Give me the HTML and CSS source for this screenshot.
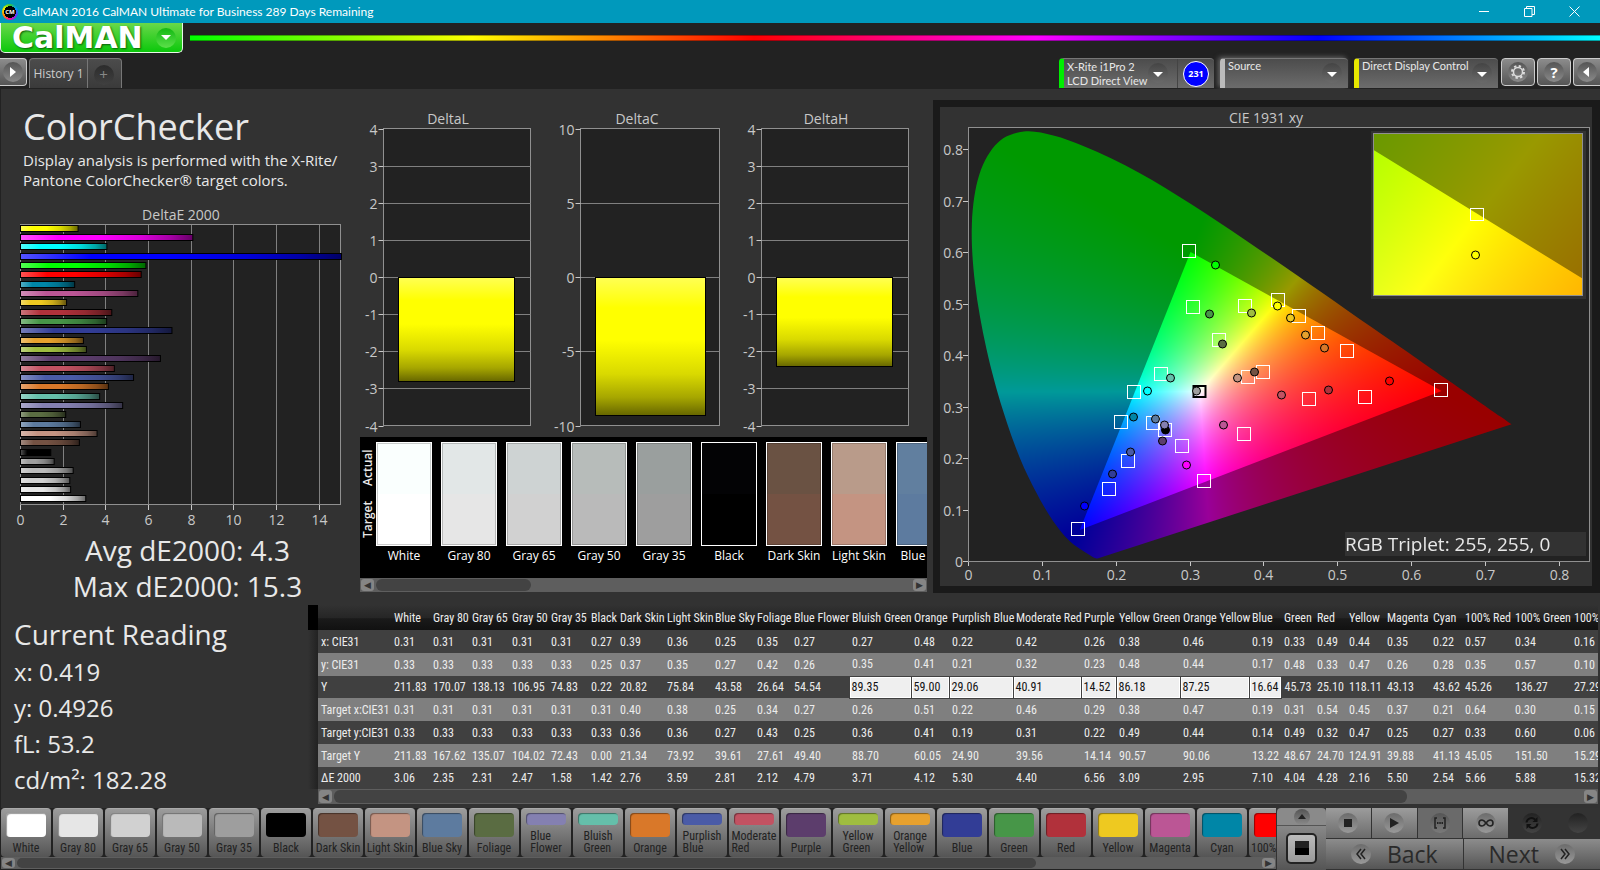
FILE: index.html
```html
<!DOCTYPE html>
<html lang="en">
<head>
<meta charset="utf-8">
<title>CalMAN 2016</title>
<link rel="stylesheet" href="styles.css">
</head>
<body>
<div class="app">
  <div class="titlebar">
    <span class="app-icon">CM</span>
    <span class="title-text">CalMAN 2016 CalMAN Ultimate for Business 289 Days Remaining</span>
    <div class="window-buttons">
      <button aria-label="Minimize"><svg width="11" height="11" viewBox="0 0 11 11"><path d="M0 5.5H10"/></svg></button>
      <button aria-label="Restore"><svg width="11" height="11" viewBox="0 0 11 11"><path d="M.5 2.5h7.500v8H.5zM2.500 2.500v-2h8v8h-2.500"/></svg></button>
      <button aria-label="Close"><svg width="11" height="11" viewBox="0 0 11 11"><path d="M.5.5l10 10M10.500.5l-10 10"/></svg></button>
    </div>
  </div>

  <div class="brandbar">
    <button class="logo"><span>CalMAN</span><span class="logo-drop"><svg width="10" height="6" viewBox="0 0 10 6"><path d="M0 0h10L5 5z"/></svg></span></button>
    <div class="spectrum"></div>
  </div>

  <div class="toolbar">
    <button class="square-button play-button" aria-label="Expand"><span class="disc"><svg width="20" height="20" viewBox="0 0 20 20"><path d="M7 5v10l6-5z" fill="#fff"/></svg></span></button>
    <div class="tabs">
      <button class="tab">History 1</button>
      <button class="tab tab-add" aria-label="Add history"><span>+</span></button>
    </div>
    <div class="devices">
      <div class="device meter">
        <button class="device-name">X-Rite i1Pro 2<br>LCD Direct View<span class="drop"><svg width="20" height="20" viewBox="0 0 20 20"><path d="M5 9h10l-5 5z" fill="#fff"/></svg></span></button>
        <span class="meter-count"><b>231</b></span>
      </div>
      <div class="device source"><button class="device-name">Source<span class="drop"><svg width="20" height="20" viewBox="0 0 20 20"><path d="M5 9h10l-5 5z" fill="#fff"/></svg></span></button></div>
      <div class="device display"><button class="device-name">Direct Display Control<span class="drop"><svg width="20" height="20" viewBox="0 0 20 20"><path d="M5 9h10l-5 5z" fill="#fff"/></svg></span></button></div>
      <button class="square-button" aria-label="Settings"><span class="disc"><svg width="20" height="20" viewBox="0 0 20 20"><circle cx="10" cy="10" r="4.500" fill="none" stroke="#ddd" stroke-width="1.500"/><circle cx="10" cy="10" r="6" fill="none" stroke="#ddd" stroke-width="2" stroke-dasharray="2.350 2.360"/></svg></span></button>
      <button class="square-button" aria-label="Help"><span class="disc help">?</span></button>
      <button class="square-button edge-button" aria-label="Collapse"><span class="disc"><svg width="20" height="20" viewBox="0 0 20 20"><path d="M12 5v10l-6-5z" fill="#fff"/></svg></span></button>
    </div>
  </div>

  <main class="workspace">
    <div class="charts">
      <section class="overview">
        <h1>ColorChecker</h1>
        <p class="intro">Display analysis is performed with the X-Rite/<br>Pantone ColorChecker® target colors.</p>
        <svg class="chart" id="delta-e" viewBox="1 203 343 330"></svg>
        <p class="summary">Avg dE2000: 4.3<br>Max dE2000: 15.3</p>
      </section>
      <section class="deltas">
        <svg class="chart" id="delta-lch" viewBox="344 104 589 333"></svg>
        <div class="strip">
          <div class="strip-view">
            <div class="strip-side"><span>Target</span><span>Actual</span></div>
            <div class="strip-items" id="strip-items"></div>
          </div>
          <div class="scrollbar"><button aria-label="Scroll left">◀</button><div class="track"><div class="thumb" style="width:29%"></div></div><button aria-label="Scroll right">▶</button></div>
        </div>
      </section>
      <section class="cie">
        <svg class="chart" id="cie" viewBox="940 107 652 479"></svg>
      </section>
    </div>

    <div class="readings">
      <section class="current">
        <h2>Current Reading</h2>
        <p>x: 0.419</p>
        <p>y: 0.4926</p>
        <p>fL: 53.2</p>
        <p>cd/m²: 182.28</p>
      </section>
      <section class="grid-panel">
        <div class="table-view"><table id="data"></table></div>
        <div class="scrollbar grid-scroll"><button aria-label="Scroll left">◀</button><div class="track"><div class="thumb" style="width:86%"></div></div><button aria-label="Scroll right">▶</button></div>
      </section>
    </div>
  </main>

  <footer class="bottom">
    <div class="patches">
      <div class="patch-list" id="patches"></div>
      <div class="scrollbar patch-scroll"><button aria-label="Scroll left">◀</button><div class="track"><div class="thumb" style="width:82%"></div></div><button aria-label="Scroll right">▶</button></div>
    </div>
    <div class="window-mode">
      <button class="mode-up" aria-label="More"><span class="disc small"><svg width="16" height="16" viewBox="0 0 16 16"><path d="M4 10h8L8 5z" fill="#222"/></svg></span></button>
      <button class="mode-pattern" aria-label="Pattern"><span></span></button>
    </div>
    <div class="transport">
      <div class="transport-row">
        <button aria-label="Stop"><span class="disc"><svg width="20" height="20" viewBox="0 0 20 20"><path d="M6 6h8v8H6z" fill="#222"/></svg></span></button>
        <button aria-label="Play"><span class="disc"><svg width="20" height="20" viewBox="0 0 20 20"><path d="M6 5v10l9-5z" fill="#222"/></svg></span></button>
        <button class="mid" aria-label="Read series"><span class="disc"><svg width="20" height="20" viewBox="0 0 20 20"><path d="M7 5H5v10h2M13 5h2v10h-2" fill="none" stroke="#222" stroke-width="1.500"/><path d="M7 10h1.500M9.300 10h1.500M11.500 10H13" stroke="#222" stroke-width="2"/></svg></span></button>
        <button aria-label="Continuous"><span class="disc"><svg width="20" height="20" viewBox="0 0 20 20"><path d="M10 10C8.500 8 7.500 7 6 7a3 3 0 0 0 0 6c1.500 0 2.500-1 4-3s2.500-3 4-3a3 3 0 0 1 0 6c-1.500 0-2.500-1-4-3z" fill="none" stroke="#222" stroke-width="1.600"/></svg></span></button>
        <button class="off" aria-label="Repeat"><span class="disc"><svg width="20" height="20" viewBox="0 0 20 20"><path d="M4.500 9.500A5 5 0 0 1 13 6.500M15.500 10.500A5 5 0 0 1 7 13.500" fill="none" stroke="#111" stroke-width="2"/><path d="M15.500 4v5h-5zM4.500 16v-5h5z" fill="#111"/></svg></span></button>
        <button class="off" aria-label="Record"><span class="disc"></span></button>
      </div>
      <div class="transport-row nav">
        <button><span class="disc"><svg width="20" height="20" viewBox="0 0 20 20"><path d="M10 5l-4 5 4 5M14 5l-4 5 4 5" fill="none" stroke="#222" stroke-width="1.500"/></svg></span>Back</button>
        <button>Next<span class="disc"><svg width="20" height="20" viewBox="0 0 20 20"><path d="M6 5l4 5-4 5M10 5l4 5-4 5" fill="none" stroke="#222" stroke-width="1.500"/></svg></span></button>
      </div>
    </div>
  </footer>
</div>
<script src="app.js"></script>
</body>
</html>
```

FILE: styles.css
```css
:root {
  --ui: "Open Sans", "Noto Sans", sans-serif;
  --narrow: "Roboto Condensed", "Open Sans Condensed", "Lato", sans-serif;
  --panel: #323232;
}
* { box-sizing: border-box; }
body { margin: 0; background: #222; color: #e8e8e8; font-family: var(--ui); font-size: 12px; }
button { font: inherit; color: inherit; margin: 0; padding: 0; border: 0; background: none; }
h1, h2, p { margin: 0; font-weight: 400; }
.app { min-height: 100vh; display: flex; flex-direction: column; overflow: hidden; }

.titlebar { height: 23px; background: #0099bc; color: #fff; display: flex; align-items: center; padding-left: 2px; }
.app-icon { width: 16px; height: 16px; border-radius: 50%; font-size: 6px; font-weight: 700; display: flex; align-items: center; justify-content: center;
  background: radial-gradient(circle, #000 0 6px, transparent 6px), conic-gradient(#3c3, #09f, #63f, #f0a, #f80, #ee0, #3c3); }
.title-text { margin-left: 5px; font-family: "Lato", sans-serif; font-size: 12px; }
.window-buttons { margin-left: auto; padding-right: 3px; display: flex; }
.window-buttons button { width: 45px; height: 22px; }
.window-buttons svg { fill: none; stroke: #fff; display: block; margin: 0 auto; }

.brandbar { height: 35px; display: flex; }
.logo { width: 183px; height: 30px; border: 1px solid #e8f8e8; border-top: 0; border-radius: 0 0 5px 5px; background: linear-gradient(#6ad84a, #0bc80b); display: flex; align-items: center; justify-content: space-between; padding: 0 6px 0 11px;
  font-family: "DejaVu Sans", sans-serif; font-weight: 700; font-size: 30px; line-height: 28px; color: #fff; text-shadow: 1px 1px 2px #0a5c0a; }
.logo-drop { width: 20px; height: 20px; border-radius: 50%; background: linear-gradient(#12b812, #5ce04a); display: flex; align-items: center; justify-content: center; }
.logo-drop svg { fill: #fff; }
.spectrum { flex: 1; height: 6px; margin: 12px 0 0 7px; background: linear-gradient(90deg, #0f0, #ff0, #f00, #f0f, #00f, #0ff); border: solid rgba(0, 0, 0, .35); border-width: 1px 0; background-clip: border-box; }

.toolbar { height: 30px; display: flex; align-items: flex-start; }
.disc { width: 20px; height: 20px; border-radius: 50%; background: linear-gradient(#555, #8a8a8a); display: flex; align-items: center; justify-content: center; }
.square-button { width: 34px; height: 28px; border: 1px solid #ccc; border-radius: 4px; background: linear-gradient(#8c8c8c, #555); display: flex; align-items: center; justify-content: center; flex: none; }
.play-button { width: 27px; border-left: 0; border-radius: 0 4px 4px 0; }
.edge-button { width: 27px; border-right: 0; border-radius: 4px 0 0 4px; }
.help { font-size: 15px; font-weight: 700; color: #fff; }
.tabs { display: flex; margin-left: 2px; height: 30px; border: 1px solid #777; border-bottom: 0; border-radius: 4px 4px 0 0; background: linear-gradient(#4c4c4c, #3a3a3a); }
.tab { width: 58px; font-size: 12px; color: #ccc; border-right: 1px solid #777; white-space: nowrap; }
.tab-add { width: 33px; border-right: 0; display: flex; align-items: center; justify-content: center; color: #888; }
.tab-add span { width: 20px; height: 20px; margin: 3px 2px 0 0; border-radius: 50%; background: linear-gradient(#2c2c2c, #404040); font-size: 15px; line-height: 19px; }
.devices { margin-left: auto; display: flex; gap: 2px; }
.device { height: 30px; display: flex; border-top: 1px solid #777; border-radius: 4px 4px 0 0; background: linear-gradient(#4c4c4c, #6c6c6c); border-left: 5px solid #0e0; margin-right: 4px; }
.device-name { flex: 1; padding: 0 4px 0 3px; text-align: left; font-size: 11px; line-height: 14px; font-family: "Lato", sans-serif; white-space: nowrap; display: block; position: relative; align-self: flex-start; }
.drop { position: absolute; right: 6px; top: 4px; width: 20px; height: 20px; border-radius: 50%; background: linear-gradient(#444, #6a6a6a); }
.meter .drop { right: 9px; }
.meter { width: 155px; }
.meter .device-name { border-right: 1px solid #444; align-self: stretch; }
.meter-count { width: 36px; display: flex; align-items: center; justify-content: center; }
.meter-count b { width: 26px; height: 26px; border: 1px solid #fff; border-radius: 50%; background: #00f; color: #fff; font-size: 9px; line-height: 24px; text-align: center; }
.source { width: 128px; border-left-color: #bbb; box-shadow: -2px -1px 5px #666; }
.display { width: 144px; border-left-color: #e8e800; margin-right: 1px; }

.workspace { flex: 1; background: var(--panel); margin: 1px 0 0 1px; }
.charts { display: grid; grid-template-columns: 343fr 589fr 667fr; align-items: start; padding-top: 11px; }
.charts > section { min-width: 0; }
.chart { display: block; width: 100%; height: auto; font-family: var(--ui); }
h1 { font-size: 36px; line-height: 44px; padding: 5px 0 0 22px; }
.intro { font-size: 15px; line-height: 20px; padding: 1px 0 13px 22px; white-space: nowrap; }
.summary { font-size: 28px; line-height: 36px; text-align: center; padding-left: 30px; margin-top: -1px; }
.deltas { padding-top: 4px; }
.strip { margin: 0 6px 0 16px; background: #000; }
.strip-view { display: flex; height: 141px; overflow: hidden; padding: 5px 0 0; }
.strip-side { width: 16px; height: 104px; flex: none; writing-mode: vertical-rl; transform: rotate(180deg); display: flex; justify-content: space-around; align-items: center; line-height: 14px; font-size: 12px; font-weight: 600; }
.strip-items { display: flex; gap: 9px; }
.strip-item { width: 56px; flex: none; text-align: center; font-size: 12px; line-height: 19px; white-space: nowrap; color: #fff; }
.swatch { height: 104px; border: 1px solid #fff; box-shadow: inset 0 0 0 1px rgba(0, 0, 0, .2); }
.strip-item span { display: flex; justify-content: center; }
.scrollbar { height: 14px; background: #5e5e5e; display: flex; padding: 1px; align-items: stretch; }
.scrollbar button { width: 13px; font-size: 9px; line-height: 10px; color: #333; background: #858585; border-radius: 3px; overflow: hidden; }
.track { flex: 1; padding: 0 2px; }
.thumb { height: 100%; border-radius: 6px; background: #434343; }
.cie { border: solid #1a1a1a; border-width: 7px 8px 7px 7px; background: var(--panel); }

.readings { display: flex; align-items: flex-start; padding-top: 1px; }
.current { width: 307px; flex: none; padding: 9px 0 0 13px; }
h2 { font-size: 28px; line-height: 40px; }
.current p { font-size: 24px; line-height: 36px; }
.grid-panel { flex: 1; min-width: 0; margin-right: 2px; }
.table-view { overflow: hidden; }
table { table-layout: fixed; border-collapse: collapse; font-family: var(--narrow); font-size: 12px; color: #ececec; }
th, td { padding: 0 0 0 3px; font-weight: 400; text-align: left; white-space: nowrap; height: 23px; line-height: 16px; }
tbody tr:nth-child(4n+3) > * { height: 22px; }
thead th { height: 25px; background: linear-gradient(#323232, #262626 50%, #1a1a1a 55%, #111); }
tbody tr { background: #404040; }
tbody tr:nth-child(even) { background: #7f7f7f; }
.selector { background: linear-gradient(90deg, #323232, #222); }
thead .selector { background: #000; }
td.edit { background: #efefef; color: #111; border: 1px solid #404040; box-shadow: inset 0 0 0 1px #fff; padding-left: 2px; }
.grid-scroll { margin-left: 10px; height: 15px; }

.bottom { height: 62px; display: flex; background: #333; }
.patches { flex: 1; min-width: 0; padding-left: 1px; background: #222; }
.patch-list { display: flex; gap: 2px; overflow: hidden; height: 49px; }
.patch { width: 50px; flex: none; border-radius: 4px; background: linear-gradient(#9c9c9c, #555); border-top: 1px solid #aaa; color: #222; font-family: var(--narrow); font-size: 12px; line-height: 12px; display: flex; flex-direction: column; align-items: center; justify-content: space-between; padding: 4px 0 3px; white-space: pre; text-align: left; }
.patch i { width: 40px; flex: 1; border-radius: 4px; margin-bottom: 5px; box-shadow: inset 1px 1px 1px rgba(0, 0, 0, .4); }
.patch-scroll { height: 12px; }
.window-mode { width: 49px; margin-left: 1px; background: #8a8a8a; border-radius: 4px 4px 0 0; display: flex; flex-direction: column; align-items: center; }
.mode-up { height: 18px; width: 100%; border-bottom: 1px solid #555; display: flex; justify-content: center; align-items: center; }
.small { width: 16px; height: 16px; }
.mode-pattern { flex: 1; width: 100%; background: linear-gradient(#888, #555); display: flex; justify-content: center; align-items: center; }
.mode-pattern span { display: block; width: 31px; height: 31px; border: 2px solid #222; border-radius: 5px; background: linear-gradient(#222 50%, #000 50%) center / 14px 14px no-repeat, linear-gradient(#bbb, #999); }
.transport { width: 274px; display: flex; flex-direction: column; gap: 1px; }
.transport-row { display: flex; gap: 1px; height: 30px; }
.transport-row button { flex: 1; display: flex; align-items: center; justify-content: center; background: linear-gradient(#9c9c9c, #6c6c6c); }
.transport-row .disc { background: linear-gradient(#6c6c6c, #999); }
.transport-row .mid { background: #6a6a6a; }
.transport-row .mid .disc { background: linear-gradient(#555, #7a7a7a); }
.transport-row .off { background: #333; }
.transport-row .off .disc { background: linear-gradient(#222, #444); }
.transport-row.nav button { gap: 16px; color: #2a2a2a; font-size: 23px; line-height: 28px; font-weight: 500; background: linear-gradient(#8c8c8c, #555); }
```

FILE: app.js
```js
const NAMES = ['White','Gray 80','Gray 65','Gray 50','Gray 35','Black','Dark Skin','Light Skin','Blue Sky','Foliage','Blue Flower','Bluish Green','Orange','Purplish Blue','Moderate Red','Purple','Yellow Green','Orange Yellow','Blue','Green','Red','Yellow','Magenta','Cyan','100% Red','100% Green','100% Blue'];
const COLORS = ['#ffffff','#e6e6e6','#d1d1d1','#bababa','#9e9e9e','#000000','#745243','#c49482','#5d7b9f','#5a6c42','#8480b1','#65bfaa','#d97829','#4a5ba7','#c25262','#5c3d6c','#9fbd40','#e7a12e','#323d96','#479648','#b1313b','#eec920','#bb5695','#0086a7','#ff0000','#00ff00','#0000ff','#00ffff','#ff00ff','#ffff00'];
const DELTA_E = [3.06,2.35,2.31,2.47,1.58,1.42,2.76,3.59,2.81,2.12,4.79,3.71,4.12,5.30,4.40,6.56,3.09,2.95,7.10,4.04,4.28,2.16,5.50,2.54,5.66,5.88,15.32,4.05,8.08,2.7];
const ROWS = [
  ['x: CIE31','0.31 0.31 0.31 0.31 0.31 0.27 0.39 0.36 0.25 0.35 0.27 0.27 0.48 0.22 0.42 0.26 0.38 0.46 0.19 0.33 0.49 0.44 0.35 0.22 0.57 0.34 0.16'],
  ['y: CIE31','0.33 0.33 0.33 0.33 0.33 0.25 0.37 0.35 0.27 0.42 0.26 0.35 0.41 0.21 0.32 0.23 0.48 0.44 0.17 0.48 0.33 0.47 0.26 0.28 0.35 0.57 0.10'],
  ['Y','211.83 170.07 138.13 106.95 74.83 0.22 20.82 75.84 43.58 26.64 54.54 89.35 59.00 29.06 40.91 14.52 86.18 87.25 16.64 45.73 25.10 118.11 43.13 43.62 45.26 136.27 27.29'],
  ['Target x:CIE31','0.31 0.31 0.31 0.31 0.31 0.31 0.40 0.38 0.25 0.34 0.27 0.26 0.51 0.22 0.46 0.29 0.38 0.47 0.19 0.31 0.54 0.45 0.37 0.21 0.64 0.30 0.15'],
  ['Target y:CIE31','0.33 0.33 0.33 0.33 0.33 0.33 0.36 0.36 0.27 0.43 0.25 0.36 0.41 0.19 0.31 0.22 0.49 0.44 0.14 0.49 0.32 0.47 0.25 0.27 0.33 0.60 0.06'],
  ['Target Y','211.83 167.62 135.07 104.02 72.43 0.00 21.34 73.92 39.61 27.61 49.40 88.70 60.05 24.90 39.56 14.14 90.57 90.06 13.22 48.67 24.70 124.91 39.88 41.13 45.05 151.50 15.29'],
  ['ΔE 2000',DELTA_E.slice(0, 27).map(v => v.toFixed(2)).join(' ')]
];
const WIDTHS = [10,73,39,39,40,39,40,29,47,48,42,37,58,62,38,64,68,35,64,69,32,33,32,38,46,32,50,59,67];

// Data table
const table = document.getElementById('data');
table.innerHTML = '<colgroup>' + WIDTHS.map(w => `<col style="width:${w}px">`).join('') + '</colgroup>' +
  '<thead><tr><th class="selector"></th><th></th>' + NAMES.map(n => `<th scope="col">${n}</th>`).join('') + '</tr></thead><tbody>' +
  ROWS.map(([label, values]) => `<tr><td class="selector"></td><th scope="row">${label}</th>` +
    values.split(' ').map((v, i) => `<td${label === 'Y' && i > 10 && i < 19 ? ' class="edit"' : ''}>${v}</td>`).join('') + '</tr>').join('') + '</tbody>';
table.style.width = WIDTHS.reduce((a, b) => a + b) + 'px';

// Actual / target swatches
const ACTUAL = ['#fafffe','#e2e7e7','#ced3d3','#b7bcba','#9a9f9e','#030305','#6a5243','#b99b8a','#617f9f'];
document.getElementById('strip-items').innerHTML = ACTUAL.map((a, i) =>
  `<div class="strip-item"><div class="swatch" style="background:linear-gradient(${a} 50%,${COLORS[i]} 50%)"></div><span>${NAMES[i]}</span></div>`).join('');

// Patch buttons
const TWO_LINE = ['Blue Flower','Bluish Green','Purplish Blue','Moderate Red','Yellow Green','Orange Yellow'];
document.getElementById('patches').innerHTML = NAMES.slice(0, 25).map((n, i) =>
  `<button class="patch"><i style="background:${COLORS[i]}"></i><span>${TWO_LINE.includes(n) ? n.replace(' ', '\n') : n}</span></button>`).join('');

const mix = (hex, to, k) => '#' + [1, 3, 5].map(i => Math.round(parseInt(hex.substr(i, 2), 16) * (1 - k) + to * k).toString(16).padStart(2, '0')).join('');
const gradient = (id, c, vertical) => `<linearGradient id="${id}" x1="0" y1="0" x2="${vertical ? 0 : 1}" y2="${vertical ? 1 : 0}"><stop offset="0" stop-color="${mix(c, 255, .33)}"/><stop offset=".22" stop-color="${c}"/><stop offset=".45" stop-color="${c}"/><stop offset=".7" stop-color="${mix(c, 0, .15)}"/><stop offset=".87" stop-color="${mix(c, 0, .35)}"/><stop offset="1" stop-color="${mix(c, 0, .6)}"/></linearGradient>`;
const line = (x1, y1, x2, y2, c = '#808080', w = 1) => `<line x1="${x1}" y1="${y1}" x2="${x2}" y2="${y2}" stroke="${c}" stroke-width="${w}"/>`;
const text = (x, y, s, anchor = 'middle', size = 14, fill = '#c8c8c8') => `<text x="${x}" y="${y}" text-anchor="${anchor}" font-size="${size}" fill="${fill}">${s}</text>`;
const frame = (x, y, w, h, fill = '#222') => `<rect x="${x}" y="${y}" width="${w}" height="${h}" fill="${fill}" stroke="#909090"/>`;

// DeltaE 2000 bars
let s = '<defs>' + COLORS.map((c, i) => gradient('bar' + i, c)).join('') + '</defs>' + text(181, 220, 'DeltaE 2000') + frame(20.5, 224.5, 320, 280);
for (let v = 0; v <= 14; v += 2) {
  const x = Math.round(20 + v * 21.33) + .5;
  if (v) s += line(x, 225, x, 504);
  s += line(x, 505, x, 510, '#c8c8c8') + text(x, 525, v);
}
DELTA_E.forEach((v, i) => {
  const y = Math.round(499.300 - i * 9.330) - 3.5;
  s += `<rect x="20.5" y="${y}" width="${Math.min(v * 21.33, 321)}" height="6" fill="url(#bar${i})" stroke="#000"/>`;
});
document.getElementById('delta-e').innerHTML = s;

// DeltaL, DeltaC, DeltaH columns
s = '<defs>' + gradient('col', '#ffff00', true) + '</defs>';
[['DeltaL', 448, 383.5, 147, 4, 1, 398.5, 116, 104], ['DeltaC', 637, 580.5, 139, 10, 5, 595.5, 110, 138], ['DeltaH', 826, 761.5, 147, 4, 1, 776.5, 116, 89]].forEach(([name, cx, x, w, max, step, bx, bw, bh]) => {
  s += text(cx, 124, name) + frame(x, 128.5, w, 297);
  for (let v = max; v >= -max; v -= step) {
    const y = Math.round(277 - v / max * 148.5) + .5;
    if (Math.abs(v) < max) s += line(x, y, x + w, y);
    s += line(x - 5, y, x, y, '#c8c8c8') + text(x - 6, y + 5, v, 'end');
  }
  s += `<rect x="${bx}" y="277.5" width="${bw}" height="${bh}" fill="url(#col)" stroke="#000"/>`;
});
document.getElementById('delta-lch').innerHTML = s;

// CIE 1931 chromaticity diagram
const LOCUS = [[.1741,.005],[.1714,.0051],[.1689,.0069],[.1644,.0109],[.1566,.0177],[.144,.0297],[.1355,.0399],[.1241,.0578],[.1096,.0868],[.0913,.1327],[.0687,.2007],[.0454,.295],[.0235,.4127],[.0082,.5384],[.0039,.6548],[.0139,.7502],[.0389,.812],[.0743,.8338],[.1142,.8262],[.1547,.8059],[.1929,.7816],[.2296,.7543],[.2658,.7243],[.3016,.6923],[.3373,.6589],[.3731,.6245],[.4087,.5896],[.4441,.5547],[.4788,.5202],[.5125,.4866],[.5448,.4544],[.5752,.4242],[.6029,.3965],[.627,.3725],[.6482,.3514],[.6658,.334],[.6915,.3083],[.719,.2809],[.7347,.2653]];
const GAMUT = [[.64,.33],[.3,.6],[.15,.06]];

function chromaLayer(w, h, toXY, level) {
  const c = document.createElement('canvas');
  c.width = w; c.height = h;
  const ctx = c.getContext('2d'), img = ctx.createImageData(w, h);
  for (let j = 0; j < h; j++) for (let i = 0; i < w; i++) {
    const [x, y0] = toXY(i + .5, j + .5), y = Math.max(y0, .001);
    const X = x / y, Z = (1 - x - y) / y;
    const rgb = [3.2406 * X - 1.5372 - .4986 * Z, -.9689 * X + 1.8758 + .0415 * Z, .0557 * X - .204 + 1.057 * Z].map(v => Math.max(v, 0));
    const m = Math.max(...rgb), o = (j * w + i) * 4;
    rgb.forEach((v, k) => { img.data[o + k] = 255 * level * v / m; });
    img.data[o + 3] = 255;
  }
  ctx.putImageData(img, 0, 0);
  return c;
}
function clipTo(layer, points, toPx, smooth) {
  const ctx = layer.getContext('2d'), p = points.map(toPx);
  ctx.globalCompositeOperation = 'destination-in';
  ctx.beginPath();
  ctx.moveTo(...p[0]);
  for (let i = 0; i < p.length - 1; i++) {
    const a = p[Math.max(i - 1, 0)], b = p[i], c = p[i + 1], d = p[Math.min(i + 2, p.length - 1)];
    if (smooth) ctx.bezierCurveTo(b[0] + (c[0] - a[0]) / 6, b[1] + (c[1] - a[1]) / 6, c[0] - (d[0] - b[0]) / 6, c[1] - (d[1] - b[1]) / 6, c[0], c[1]);
    else ctx.lineTo(...c);
  }
  ctx.closePath();
  ctx.fill();
  return layer;
}
function paint(canvas, x0, y0, sx, sy) {
  const w = canvas.width, h = canvas.height;
  const toXY = (i, j) => [x0 + i / sx, y0 + (h - j) / sy];
  const toPx = ([x, y]) => [(x - x0) * sx, h - (y - y0) * sy];
  const ctx = canvas.getContext('2d');
  ctx.drawImage(clipTo(chromaLayer(w, h, toXY, .6), LOCUS, toPx, true), 0, 0);
  ctx.drawImage(clipTo(chromaLayer(w, h, toXY, 1), GAMUT, toPx, false), 0, 0);
}

const TARGETS = [[1189,251],[1193,307],[1245,306],[1219,340],[1161,374],[1134,392],[1121,422],[1153,423],[1165,430],[1182,446],[1128,461],[1109,489],[1078,529],[1204,481],[1244,434],[1248,377],[1263,372],[1278,300],[1299,316],[1318,333],[1347,351],[1309,399],[1365,397],[1441,390]];
const ACTUALS = [[1215,265,25],[1209,314,19],[1251,313,16],[1222,344,9],[1170,378,11],[1147,391,27],[1133,417,23],[1155,419,8],[1165,430,5],[1164,425,10],[1162,441,15],[1130,452,13],[1112,474,18],[1084,506,26],[1186,465,28],[1223,425,22],[1237,378,7],[1254,372,6],[1196,391,4],[1277,306,29],[1290,318,21],[1305,335,17],[1324,348,12],[1281,395,14],[1328,390,20],[1389,381,24]];
s = text(1266, 123, 'CIE 1931 xy') + frame(968.5, 127.5, 621, 434);
for (let i = 0; i <= 8; i++) {
  const x = Math.round(968 + i * 73.850) + .5, y = Math.round(561 - i * 51.500) + .5, label = i ? '0.' + i : '0';
  s += line(x, 562, x, 566, '#c8c8c8') + text(x, 580, label) + line(963, y, 968, y, '#c8c8c8') + text(963, y + 5, label, 'end');
}
s += '<foreignObject x="969" y="128" width="620" height="433"><canvas id="cie-fill" width="620" height="433" style="display:block"></canvas></foreignObject>';
s += TARGETS.map(([x, y]) => `<rect x="${x - 6.5}" y="${y - 6.5}" width="13" height="13" fill="none" stroke="#fff"/>`).join('');
s += '<rect x="1193.5" y="386" width="12" height="11" fill="none" stroke="#000" stroke-width="2"/>';
s += ACTUALS.map(([x, y, c]) => `<circle cx="${x + .5}" cy="${y}" r="4" fill="${COLORS[c]}" stroke="#000"/>`).join('');
s += '<rect x="1371" y="131" width="215" height="168" fill="#323232"/><rect x="1373.5" y="133.5" width="209" height="162" fill="none" stroke="#909090"/>';
s += '<foreignObject x="1374" y="134" width="208" height="161"><canvas id="cie-inset" width="208" height="161" style="display:block"></canvas></foreignObject>';
s += '<rect x="1470.5" y="208.5" width="13" height="12" fill="none" stroke="#fff"/><circle cx="1475.5" cy="255" r="4" fill="#ff0" stroke="#000"/>';
s += '<rect x="1345" y="532" width="241" height="24" fill="#323232"/>' + text(1345, 551, 'RGB Triplet: 255, 255, 0', 'start', 19, '#e8e8e8');
document.getElementById('cie').innerHTML = s;
paint(document.getElementById('cie-fill'), 0, 0, 738.5, 515);
paint(document.getElementById('cie-inset'), .3943, .4803, 4170, 3230);
```
